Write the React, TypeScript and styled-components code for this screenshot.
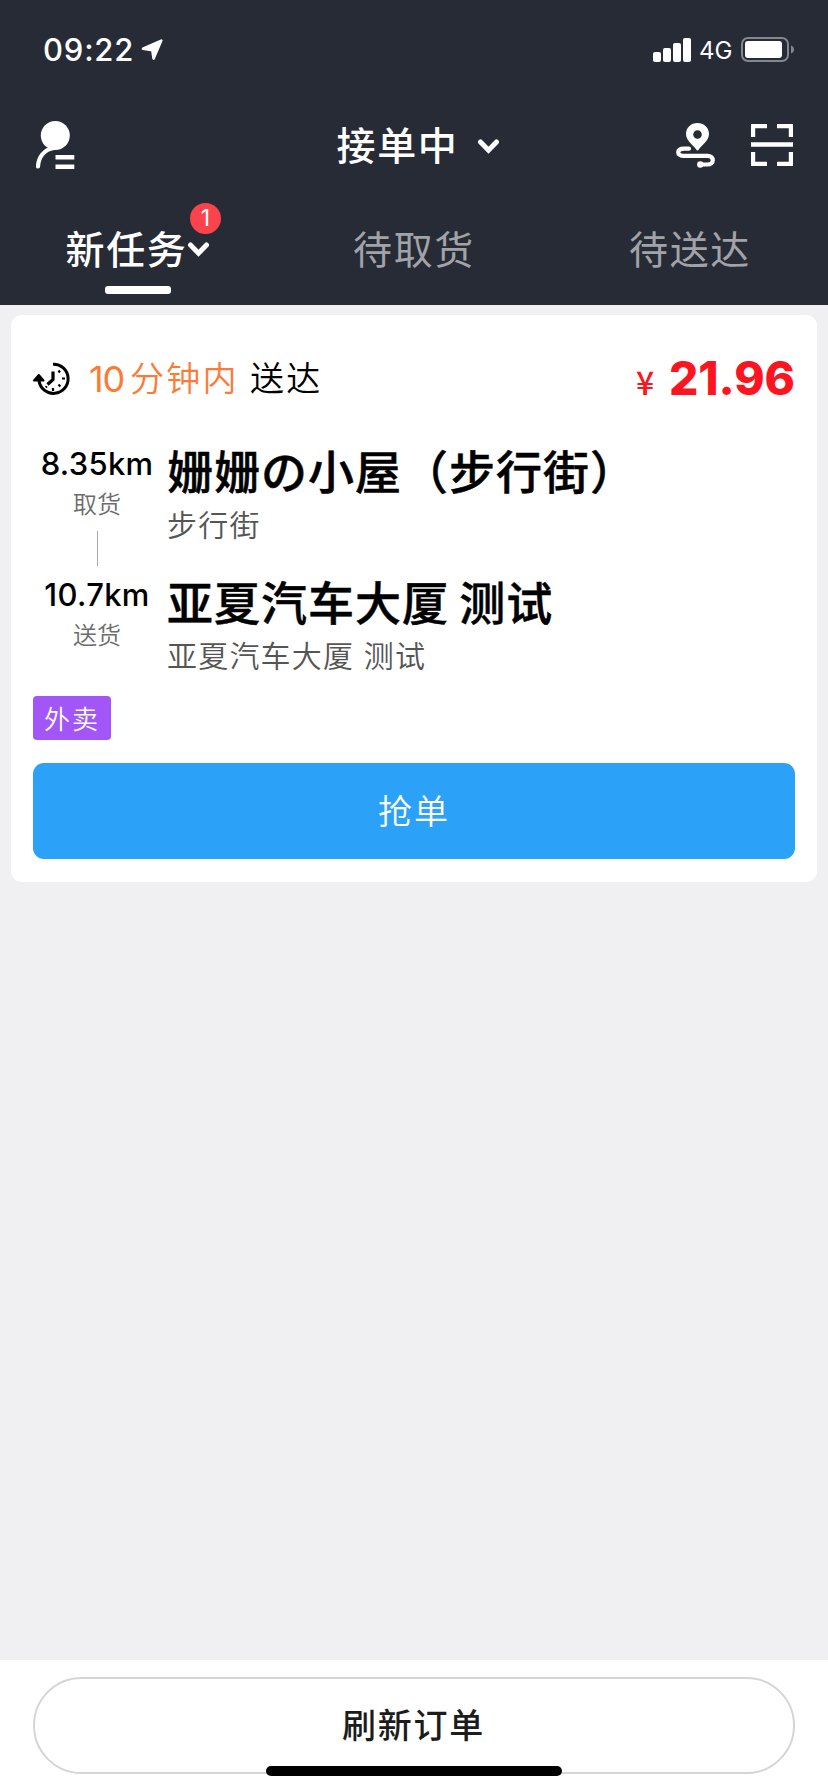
import React from "react";
import styled, { createGlobalStyle } from "styled-components";

const GlobalStyle = createGlobalStyle`
  *, *::before, *::after { box-sizing: border-box; }
  html, body { margin: 0; padding: 0; }
  body { background: #f0f0f3; }
  svg { display: block; flex: none; }
  button { margin: 0; padding: 0; border: 0; background: none; color: inherit; font: inherit; letter-spacing: inherit; }
`;

const Screen = styled.div`
  position: relative;
  display: flex;
  flex-direction: column;
  width: 828px;
  height: 1792px;
  overflow: hidden;
  background: #f0f0f3;
  color: #000;
  font-family: Inter, "Noto Sans CJK SC", sans-serif;
  white-space: nowrap;
`;

const Header = styled.header`
  display: flex;
  flex-direction: column;
  height: 305px;
  background: #272b36;
  color: #fff;
`;

const StatusBar = styled.div`
  display: flex;
  align-items: center;
  height: 99px;
  padding: 0 33px 0 43px;
`;

const Clock = styled.span`
  width: 98px;
  font-size: 31px;
  font-weight: 500;
  line-height: 40px;
  letter-spacing: 0.8px;
`;

const StatusGroup = styled.div`
  display: flex;
  align-items: center;
  margin-left: auto;
`;

const Network = styled.span`
  width: 32px;
  margin: 3px 10px 0 8px;
  font-size: 24px;
  line-height: 28px;
`;

const NavBar = styled.div`
  display: grid;
  grid-template-columns: 1fr auto 1fr;
  align-items: center;
  height: 92px;
  padding: 0 35px 0 36px;
`;

const StatusPicker = styled.button`
  display: flex;
  align-items: center;
  gap: 19px;
  padding: 2px 0 0 6px;
  font-size: 39px;
  font-weight: 500;
  line-height: 56px;
  letter-spacing: 1.7px;
`;

const NavActions = styled.div`
  display: flex;
  justify-content: flex-end;
  align-items: center;
  gap: 36px;
`;

const Tabs = styled.nav`
  display: grid;
  grid-template-columns: repeat(3, 1fr);
  height: 114px;
`;

const Tab = styled.button<{ $active?: boolean }>`
  position: relative;
  display: flex;
  justify-content: center;
  align-items: flex-start;
  padding-top: 31px;
  color: ${(p) => (p.$active ? "#fff" : "#a1a3a8")};
  font-size: 39px;
  font-weight: ${(p) => (p.$active ? 500 : 400)};
  line-height: 56px;
  letter-spacing: 1.7px;

  svg { margin: 20px 2px 0 0; }

  &::after {
    content: "";
    display: ${(p) => (p.$active ? "block" : "none")};
    position: absolute;
    left: 105px;
    bottom: 11px;
    width: 66px;
    height: 8px;
    border-radius: 3px;
    background: #fff;
  }
`;

const CountBadge = styled.span`
  position: absolute;
  top: 12px;
  left: 190px;
  width: 31px;
  height: 31px;
  border-radius: 50%;
  background: #fb434d;
  font-size: 23px;
  font-weight: 400;
  line-height: 31px;
  letter-spacing: 0;
  text-align: center;
`;

const TaskList = styled.main`
  flex: 1;
  padding: 10px 11px;
`;

const TaskCard = styled.article`
  height: 567px;
  padding: 24px 22px 22px;
  border-radius: 11px;
  background: #fff;
`;

const CardHead = styled.div`
  display: flex;
  align-items: center;
  height: 80px;
  margin-bottom: 22px;
`;

const Deadline = styled.div`
  display: flex;
  margin-left: 18px;
  font-size: 34px;
  font-weight: 350;
  line-height: 50px;
  letter-spacing: 2.2px;
`;

const Minutes = styled.span`
  width: 41px;
  color: #fd7b37;
  font-size: 36px;
  font-weight: 400;
  letter-spacing: -1.2px;
`;

const Within = styled.span`
  width: 120px;
  color: #fd7b37;
`;

const Price = styled.div`
  display: flex;
  align-items: baseline;
  margin-left: auto;
  color: #fc1420;
`;

const Currency = styled.span`
  width: 33px;
  font-family: "Noto Sans CJK SC", sans-serif;
  font-size: 32px;
  font-weight: 500;
  line-height: 50px;
`;

const Amount = styled.span`
  font-size: 46px;
  font-weight: 800;
  line-height: 50px;
`;

const Stop = styled.section<{ $last?: boolean }>`
  display: grid;
  grid-template-columns: 128px 1fr;
  column-gap: 6px;
  height: ${(p) => (p.$last ? 107 : 131)}px;
`;

const DistanceColumn = styled.div`
  display: flex;
  flex-direction: column;
  align-items: center;
  padding-top: 3px;
`;

const Distance = styled.span`
  font-size: 31px;
  font-weight: 450;
  line-height: 40px;
  letter-spacing: 0.3px;
`;

const StopKind = styled.span`
  margin-top: 4px;
  color: #6c6c6c;
  font-size: 24px;
  font-weight: 350;
  line-height: 34px;
`;

const Connector = styled.i`
  width: 1px;
  height: 35px;
  margin-top: 9px;
  background: #a8a8a8;
`;

const Place = styled.div`
  display: flex;
  flex-direction: column;
`;

const PlaceName = styled.strong`
  font-size: 46px;
  font-weight: 500;
  line-height: 63px;
  letter-spacing: 1px;
  word-spacing: -3px;
  -webkit-text-stroke: 0.5px currentColor;
`;

const Address = styled.span`
  color: #555;
  font-size: 30px;
  font-weight: 350;
  line-height: 42px;
  letter-spacing: 1.2px;
`;

const KindTag = styled.span`
  display: flex;
  justify-content: center;
  align-items: center;
  width: 78px;
  height: 44px;
  margin-top: 17px;
  padding-bottom: 2px;
  border-radius: 4px;
  background: #a256f8;
  color: #fff;
  font-size: 26px;
  font-weight: 350;
  letter-spacing: 2px;
`;

const GrabButton = styled.button`
  display: flex;
  justify-content: center;
  align-items: center;
  width: 100%;
  height: 96px;
  margin-top: 23px;
  padding-bottom: 4px;
  border-radius: 11px;
  background: #2ba1f7;
  color: #fff;
  font-size: 34px;
  font-weight: 350;
  letter-spacing: 2px;
`;

const Footer = styled.footer`
  height: 132px;
  padding: 17px 33px 0;
  background: #fff;
`;

const RefreshButton = styled.button`
  display: flex;
  justify-content: center;
  align-items: center;
  width: 100%;
  height: 97px;
  padding: 0 1px 4px 0;
  border: 2px solid #d5d5d5;
  border-radius: 49px;
  color: #1c1c1c;
  font-size: 34px;
  font-weight: 500;
  letter-spacing: 1.8px;
`;

const HomeIndicator = styled.div`
  position: absolute;
  left: 266px;
  bottom: 16px;
  width: 296px;
  height: 10px;
  border-radius: 5px;
  background: #000;
`;

const LocationArrow = () => (
  <svg width="22" height="22" viewBox="0 0 22 22">
    <path d="M20.300 1.600 12.600 19.600 11.300 11.300 2 9.800Z" fill="#fff" stroke="#fff" strokeWidth="2.600" strokeLinejoin="round" />
  </svg>
);

const Signal = () => (
  <svg width="38" height="24" viewBox="0 0 38 24" fill="#fff">
    <rect x="0" y="14" width="8" height="10" rx="2" />
    <rect x="10" y="10" width="8" height="14" rx="2" />
    <rect x="20" y="5" width="8" height="19" rx="2" />
    <rect x="30" y="0" width="8" height="24" rx="2" />
  </svg>
);

const Battery = () => (
  <svg width="54" height="25" viewBox="0 0 54 25">
    <rect x="1" y="1" width="46" height="23" rx="6" fill="none" stroke="#85878e" strokeWidth="2" />
    <rect x="4" y="4" width="37" height="17" rx="3" fill="#fff" />
    <path d="M50 8.500c4 1.200 4 6.800 0 8Z" fill="#85878e" />
  </svg>
);

const ProfileIcon = () => (
  <svg width="39" height="50" viewBox="0 0 39 50">
    <circle cx="19.300" cy="15.500" r="14.500" fill="#fff" />
    <path d="M2 46.500C2.500 37 8 29.500 18 28" fill="none" stroke="#fff" strokeWidth="4.200" strokeLinecap="round" />
    <path d="M19.500 37.300H38.300M19.500 46.700H38.300" stroke="#fff" strokeWidth="4.600" />
  </svg>
);

const Chevron = () => (
  <svg width="21" height="15" viewBox="0 0 21 15">
    <path d="M2.500 3 10.500 11.200 18.500 3" fill="none" stroke="#fff" strokeWidth="5" strokeLinecap="round" strokeLinejoin="miter" />
  </svg>
);

const RouteIcon = () => (
  <svg width="39" height="46" viewBox="0 0 39 46">
    <path
      fill="#fff"
      fillRule="evenodd"
      d="M21.500 1C15 1 10 5.700 10 12c0 7 7.500 11 10.200 15.500q1.300 2 2.600 0C25.500 23 33 19 33 12c0-6.300-5-11-11.500-11Zm0 7.200a4.300 4.300 0 1 1 0 8.600a4.300 4.300 0 0 1 0-8.600Z"
    />
    <path
      d="M13 26.700H8C.5 26.700.5 33.800 7 33.800H31.500C38.500 33.800 38.500 42.500 31.500 42.500H26"
      fill="none"
      stroke="#fff"
      strokeWidth="4.200"
      strokeLinecap="round"
    />
    <circle cx="24.300" cy="42.500" r="3.200" fill="#fff" />
  </svg>
);

const ScanIcon = () => (
  <svg width="42" height="42" viewBox="0 0 42 42">
    <path
      d="M16 2H2V13M26 2H40V13M2 28V40H16M40 28V40H26M0 20.500H42"
      fill="none"
      stroke="#fff"
      strokeWidth="4.400"
    />
  </svg>
);

const TimerIcon = () => (
  <svg width="38" height="34" viewBox="0 0 38 34" fill="none" stroke="#000">
    <path d="M20 2.200A14.600 14.600 0 1 1 6 18.500" strokeWidth="3" />
    <path d="M5.800 13 10.500 18.500H1Z" fill="#000" strokeWidth="2" strokeLinejoin="round" />
    <path d="M20 9.500V17.500L14.500 22.500" strokeWidth="3.200" />
    <path
      d="M25.500 10.500 27 8.500M29 16.500H32M25.500 22.500 27.300 24.500M20 26V29M13.800 24.300 12.800 25.500"
      strokeWidth="2.200"
    />
  </svg>
);

type StopData = { distance: string; kind: string; name: string; address: string };

const stops: StopData[] = [
  { distance: "8.35km", kind: "取货", name: "姗姗の小屋（步行街）", address: "步行街" },
  { distance: "10.7km", kind: "送货", name: "亚夏汽车大厦 测试", address: "亚夏汽车大厦 测试" },
];

export default function App() {
  return (
    <Screen lang="zh-CN">
      <GlobalStyle />
      <Header>
        <StatusBar>
          <Clock>09:22</Clock>
          <LocationArrow />
          <StatusGroup>
            <Signal />
            <Network>4G</Network>
            <Battery />
          </StatusGroup>
        </StatusBar>
        <NavBar>
          <ProfileIcon />
          <StatusPicker>
            接单中
            <Chevron />
          </StatusPicker>
          <NavActions>
            <RouteIcon />
            <ScanIcon />
          </NavActions>
        </NavBar>
        <Tabs>
          <Tab $active>
            新任务
            <Chevron />
            <CountBadge>1</CountBadge>
          </Tab>
          <Tab>待取货</Tab>
          <Tab>待送达</Tab>
        </Tabs>
      </Header>
      <TaskList>
        <TaskCard>
          <CardHead>
            <TimerIcon />
            <Deadline>
              <Minutes>10</Minutes>
              <Within>分钟内</Within>
              <span>送达</span>
            </Deadline>
            <Price>
              <Currency>¥</Currency>
              <Amount>21.96</Amount>
            </Price>
          </CardHead>
          {stops.map((stop, i) => (
            <Stop key={stop.distance} $last={i === stops.length - 1}>
              <DistanceColumn>
                <Distance>{stop.distance}</Distance>
                <StopKind>{stop.kind}</StopKind>
                {i < stops.length - 1 && <Connector />}
              </DistanceColumn>
              <Place>
                <PlaceName>{stop.name}</PlaceName>
                <Address>{stop.address}</Address>
              </Place>
            </Stop>
          ))}
          <KindTag>外卖</KindTag>
          <GrabButton>抢单</GrabButton>
        </TaskCard>
      </TaskList>
      <Footer>
        <RefreshButton>刷新订单</RefreshButton>
      </Footer>
      <HomeIndicator />
    </Screen>
  );
}
